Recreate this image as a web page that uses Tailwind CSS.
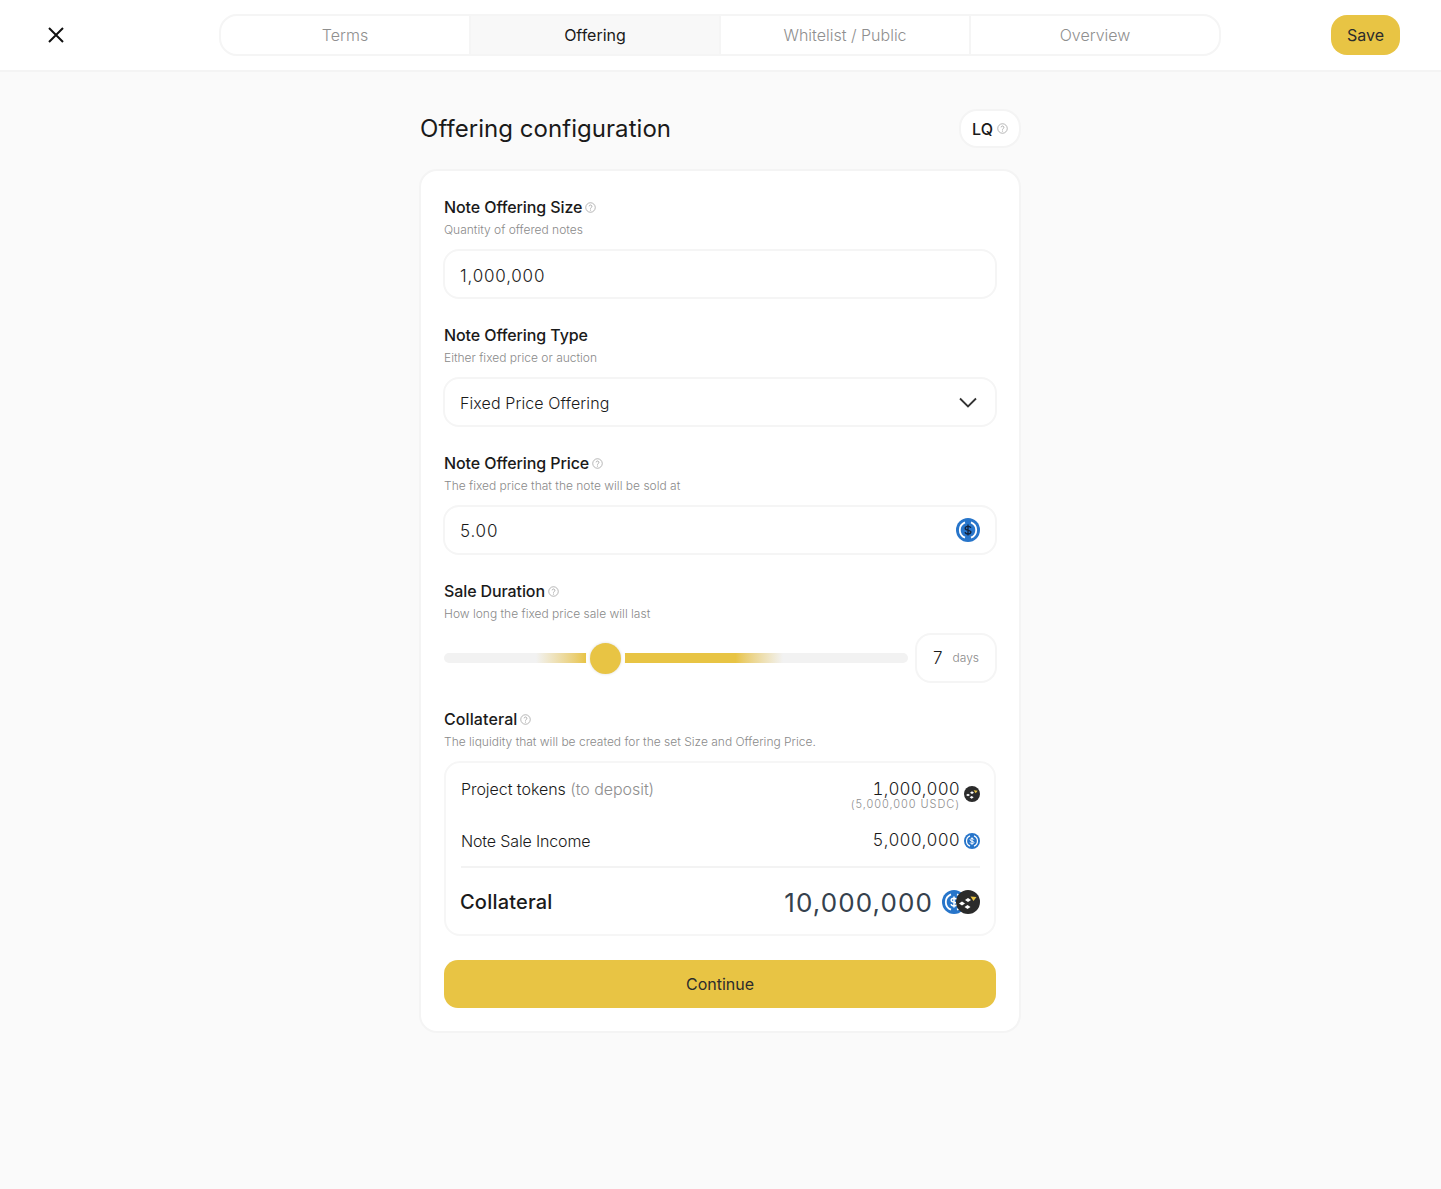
<!DOCTYPE html>
<html lang="en">
<head>
    <meta charset="UTF-8">
    <meta name="viewport" content="width=device-width, initial-scale=1.0">
    <title>Offering configuration</title>
    <script src="https://cdn.jsdelivr.net/npm/@tailwindcss/browser@4"></script>
</head>
<body class="bg-[#fafafa] font-['Inter',sans-serif] text-[#1a1a1a]">
    <svg class="hidden">
        <symbol id="help" viewBox="0 0 12 12">
            <circle cx="6" cy="6" r="5.2" fill="none" stroke="#9c9c9c" stroke-width="0.8"/>
            <path d="M4.500 4.700a1.500 1.500 0 1 1 2.400 1.300c-.6.400-.9.700-.9 1.200" fill="none" stroke="#9c9c9c" stroke-width="0.9"/>
            <circle cx="6" cy="8.800" r="0.6" fill="#9c9c9c"/>
        </symbol>
        <symbol id="usdc" viewBox="0 0 24 24">
            <circle cx="12" cy="12" r="12" fill="#2775ca"/>
            <path d="M9 4.300a8.300 8.300 0 0 0 0 15.400M15 4.300a8.300 8.300 0 0 1 0 15.400" fill="none" stroke="#fff" stroke-width="1.800"/>
            <path d="M14.800 10c-.2-1.100-1.300-1.700-2.800-1.700-1.600 0-2.800.7-2.800 1.900 0 2.900 5.700 1.300 5.700 3.900 0 1.200-1.300 1.900-2.900 1.900-1.600 0-2.700-.6-2.900-1.800M12 6.500v11" fill="none" stroke="#14233c" stroke-width="1.300"/>
        </symbol>
        <symbol id="usdc-light" viewBox="0 0 24 24">
            <circle cx="12" cy="12" r="12" fill="#2775ca"/>
            <path d="M9 4.300a8.300 8.300 0 0 0 0 15.400M15 4.300a8.300 8.300 0 0 1 0 15.400" fill="none" stroke="#fff" stroke-width="1.800"/>
            <path d="M14.800 10c-.2-1.100-1.300-1.700-2.800-1.700-1.600 0-2.800.7-2.800 1.900 0 2.900 5.700 1.300 5.700 3.900 0 1.200-1.300 1.900-2.900 1.900-1.600 0-2.700-.6-2.900-1.800M12 6.500v11" fill="none" stroke="#fff" stroke-width="1.500"/>
        </symbol>
        <symbol id="token" viewBox="0 0 24 24">
            <circle cx="12" cy="12" r="12" fill="#2b2b2b"/>
            <path d="M3 13.500l3-2 3 2-3 2zM9 10l3-2 3 2-3 2zM8.500 17l3-2 3 2-3 2z" fill="#fff"/>
            <path d="M14.500 6.500l6 .5-3 4z" fill="#e8c444"/>
        </symbol>
    </svg>

    <!-- Header -->
    <header class="h-[72px] bg-white border-b-2 border-[#f4f4f4] flex items-center pl-[47px] pr-[41px]">
        <svg class="w-[18px] h-[18px] shrink-0" viewBox="0 0 18 18" fill="none" stroke="#111" stroke-width="2"><path d="M2 2l14 14M16 2L2 16"/></svg>
        <nav class="ml-[154px] w-[1002px] h-[42px] flex rounded-[18px] border-2 border-[#f5f5f5] overflow-hidden text-[16px] text-[#8f8f8f] font-light">
            <div class="flex-1 flex items-center justify-center">Terms</div>
            <div class="flex-1 flex items-center justify-center bg-[#f8f8f8] border-l-2 border-[#f5f5f5] text-[#1a1a1a] font-normal">Offering</div>
            <div class="flex-1 flex items-center justify-center border-l-2 border-[#f5f5f5]">Whitelist / Public</div>
            <div class="flex-1 flex items-center justify-center border-l-2 border-[#f5f5f5]">Overview</div>
        </nav>
        <button class="ml-auto w-[69px] h-[40px] rounded-[16px] bg-[#e8c444] text-[16px] text-[#2c2c2c]">Save</button>
    </header>

    <main class="w-[602px] ml-[419px] pb-[155px]">
        <div class="h-[97px] pt-[16px] flex items-center justify-between pl-[1px]">
            <h1 class="pt-[1px] text-[24px] font-normal tracking-[0.05px]">Offering configuration</h1>
            <div class="h-[39px] w-[62px] rounded-[18px] bg-white border-2 border-[#f4f4f4] flex items-center justify-center gap-[4px] text-[16px] font-medium">
                LQ <svg class="w-[11px] h-[11px]"><use href="#help"/></svg>
            </div>
        </div>

        <section class="bg-white border-2 border-[#f4f4f4] rounded-[18px] h-[864px] px-[23px] pt-[25px]">
            <!-- Size -->
            <div class="h-[128px]">
                <h2 class="h-[22px] flex items-center gap-[3px] text-[16px] font-[450] tracking-[-0.1px]">Note Offering Size <svg class="w-[11px] h-[11px]"><use href="#help"/></svg></h2>
                <p class="mt-[4px] text-[12px] leading-[16px] font-light text-[#8a8a8a]">Quantity of offered notes</p>
                <div class="mt-[11px] -mx-[1px] h-[50px] rounded-[16px] border-2 border-[#f5f5f5] flex items-center px-[15px] pt-[5px] text-[17px] font-light tracking-[0.8px]">1,000,000</div>
            </div>
            <!-- Type -->
            <div class="h-[128px]">
                <h2 class="h-[22px] flex items-center text-[16px] font-[450] tracking-[-0.1px]">Note Offering Type</h2>
                <p class="mt-[4px] text-[12px] leading-[16px] font-light text-[#8a8a8a]">Either fixed price or auction</p>
                <div class="mt-[11px] -mx-[1px] h-[50px] rounded-[16px] border-2 border-[#f5f5f5] flex items-center justify-between pl-[15px] pr-[18px] text-[16px] font-light tracking-[0.1px]">
                    <span class="pt-[2px]">Fixed Price Offering</span>
                    <svg class="w-[18px] h-[11px]" viewBox="0 0 18 11" fill="none" stroke="#333" stroke-width="1.800"><path d="M1 1.500l8 8 8-8"/></svg>
                </div>
            </div>
            <!-- Price -->
            <div class="h-[128px]">
                <h2 class="h-[22px] flex items-center gap-[3px] text-[16px] font-[450] tracking-[-0.1px]">Note Offering Price <svg class="w-[11px] h-[11px]"><use href="#help"/></svg></h2>
                <p class="mt-[4px] text-[12px] leading-[16px] font-light text-[#8a8a8a]">The fixed price that the note will be sold at</p>
                <div class="mt-[11px] -mx-[1px] h-[50px] rounded-[16px] border-2 border-[#f5f5f5] flex items-center justify-between pl-[15px] pr-[15px] text-[17px] font-light tracking-[0.8px]">
                    <span class="pt-[3px]">5.00</span>
                    <svg class="w-[24px] h-[24px]"><use href="#usdc"/></svg>
                </div>
            </div>
            <!-- Duration -->
            <div class="h-[128px]">
                <h2 class="h-[22px] flex items-center gap-[3px] text-[16px] font-[450] tracking-[-0.1px]">Sale Duration <svg class="w-[11px] h-[11px]"><use href="#help"/></svg></h2>
                <p class="mt-[4px] text-[12px] leading-[16px] font-light text-[#8a8a8a]">How long the fixed price sale will last</p>
                <div class="mt-[11px] -mr-[1px] h-[50px] flex items-center justify-between">
                    <div class="relative w-[464px] h-[10px] rounded-full bg-[#f2f2f2]">
                        <div class="absolute left-[92px] top-0 h-[10px] w-[50px] bg-gradient-to-r from-[#f2f2f2] to-[#e8c444]"></div>
                        <div class="absolute left-[181px] top-0 h-[10px] w-[158px] bg-gradient-to-r from-[#e8c444] from-[70%] to-[#f2f2f2]"></div>
                        <div class="absolute left-[142px] top-[-15px] w-[39px] h-[40px] flex items-center justify-center bg-white rounded-full">
                            <div class="w-[31px] h-[31px] rounded-full bg-[#e8c444] shadow-[0_0_3px_rgba(0,0,0,0.15)]"></div>
                        </div>
                    </div>
                    <div class="w-[82px] h-[50px] rounded-[16px] border-2 border-[#f5f5f5] flex items-center pl-[16px] gap-[10px]">
                        <span class="pt-[2px] text-[17px] font-light">7</span><span class="text-[12px] font-light text-[#8a8a8a]">days</span>
                    </div>
                </div>
            </div>
            <!-- Collateral -->
            <div>
                <h2 class="h-[22px] flex items-center gap-[3px] text-[16px] font-[450] tracking-[0.1px]">Collateral <svg class="w-[11px] h-[11px]"><use href="#help"/></svg></h2>
                <p class="mt-[4px] text-[12px] leading-[16px] font-light text-[#8a8a8a]">The liquidity that will be created for the set Size and Offering Price.</p>
                <div class="mt-[11px] w-[552px] h-[175px] rounded-[16px] border-2 border-[#f6f6f6] pl-[15px] pr-[14px]">
                    <div class="h-[56px] pt-[15px] flex justify-between">
                        <div class="text-[16px] leading-[22px] font-light tracking-[-0.05px]">Project tokens <span class="text-[#8f8f8f]">(to deposit)</span></div>
                        <div class="flex items-start gap-[4px] mt-[1px]">
                            <div class="text-right">
                                <div class="text-[17px] leading-[20px] font-light tabular-nums tracking-[0.15px]">1,000,000</div>
                                <div class="text-[11px] leading-[11px] font-light text-[#8f8f8f] tracking-[0.950px]">(5,000,000 USDC)</div>
                            </div>
                            <svg class="w-[16px] h-[16px] mt-[7px]"><use href="#token"/></svg>
                        </div>
                    </div>
                    <div class="h-[49px] flex items-center justify-between border-b-2 border-[#f3f3f3] pb-[3px]">
                        <div class="text-[16px] font-light tracking-[-0.15px]">Note Sale Income</div>
                        <div class="flex items-center gap-[4px]">
                            <span class="text-[17px] font-light tabular-nums tracking-[0.15px]">5,000,000</span>
                            <svg class="w-[16px] h-[16px]"><use href="#usdc-light"/></svg>
                        </div>
                    </div>
                    <div class="h-[66px] pt-[2px] flex items-center justify-between">
                        <div class="-ml-[1px] text-[20px] font-medium tracking-[0.2px]">Collateral</div>
                        <div class="flex items-center">
                            <span class="text-[26px] font-normal tracking-[1.100px] text-[#35414d]">10,000,000</span>
                            <svg class="w-[24px] h-[24px] ml-[9px]"><use href="#usdc-light"/></svg>
                            <svg class="w-[24px] h-[24px] -ml-[10px]"><use href="#token"/></svg>
                        </div>
                    </div>
                </div>
                <button class="mt-[24px] w-[552px] h-[48px] rounded-[14px] bg-[#e8c444] text-[16px] text-[#2c2c2c]">Continue</button>
            </div>
        </section>
    </main>
</body>
</html>
